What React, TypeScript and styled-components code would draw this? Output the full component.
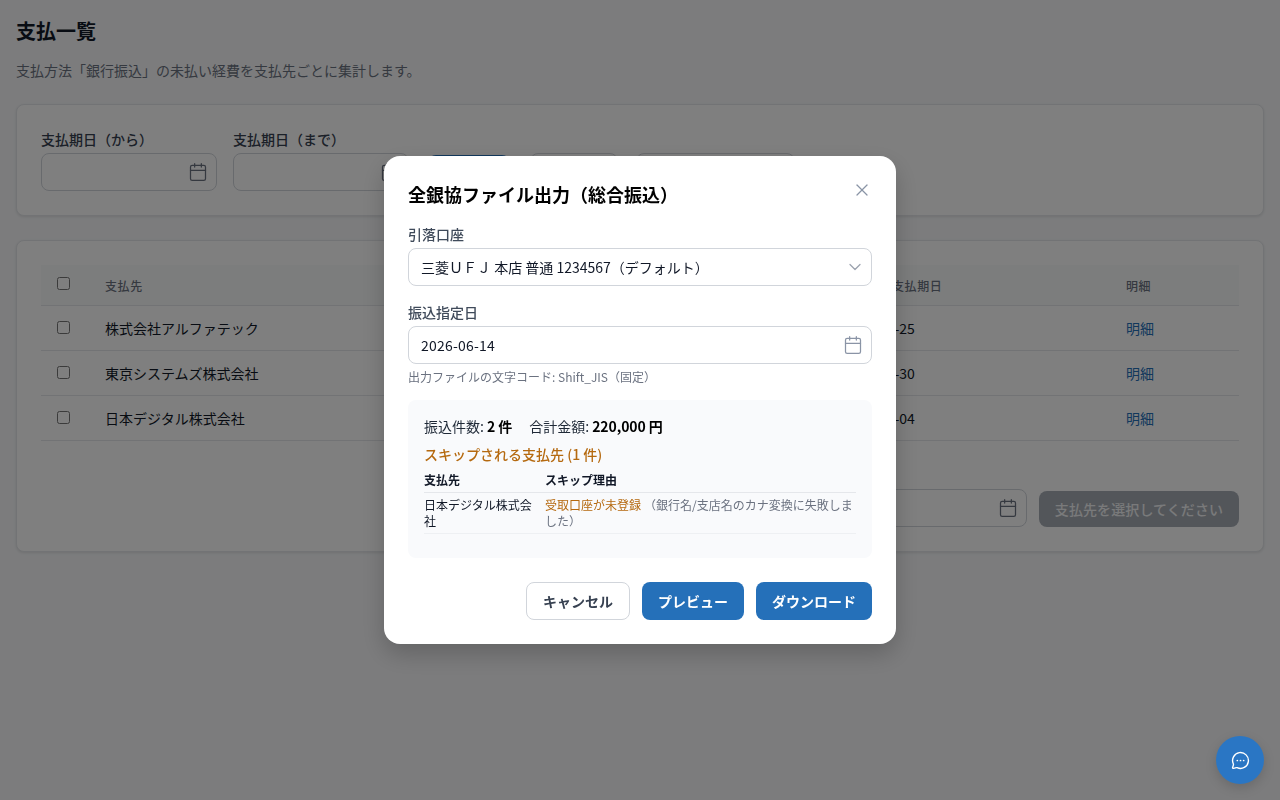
import { Calendar, ChevronDown, X } from "lucide-react"
import styled, { createGlobalStyle } from "styled-components"

const GlobalStyle = createGlobalStyle`
  html, body {
    margin: 0;
    padding: 0;
    background: #f8f9fb;
    color: #111827;
    font-family: "Noto Sans CJK JP", "Noto Sans", sans-serif;
    font-size: 14px;
  }
  * {
    box-sizing: border-box;
  }
`

const Page = styled.main`
  display: flex;
  flex-direction: column;
  padding: 16px;
  height: 800px;
`

const Title = styled.h1`
  margin: 0;
  font-size: 20px;
  line-height: 30px;
  font-weight: 700;
`

const Lead = styled.p`
  margin: 14px 0 0;
  font-size: 14px;
  line-height: 21px;
  color: #6b7280;
`

const Card = styled.section<{ $top: number }>`
  margin-top: ${(p) => p.$top}px;
  padding: 24px;
  background: #fff;
  border: 1px solid #e5e7eb;
  border-radius: 8px;
  box-shadow: 0 1px 3px rgba(0, 0, 0, 0.1);
`

const FilterRow = styled.div`
  display: flex;
  align-items: flex-end;
`

const Field = styled.div<{ $gap?: number }>`
  display: flex;
  flex-direction: column;
  width: 176px;
  margin-right: ${(p) => p.$gap ?? 0}px;
`

const FilterLabel = styled.label`
  font-size: 14px;
  line-height: 20px;
  font-weight: 500;
  color: #374151;
  margin-bottom: 4px;
`

const InputBox = styled.div`
  display: flex;
  align-items: center;
  justify-content: space-between;
  height: 38px;
  padding: 0 8px 0 12px;
  background: #fff;
  border: 1px solid #d1d5db;
  border-radius: 8px;
  font-size: 14px;
  color: #111827;
  svg {
    color: #6b7280;
    flex: none;
  }
`

const GhostButton = styled.div<{ $width: number; $left: number; $solid?: boolean }>`
  width: ${(p) => p.$width}px;
  height: ${(p) => (p.$solid ? 36 : 38)}px;
  margin-left: ${(p) => p.$left}px;
  border-radius: 8px;
  background: ${(p) => (p.$solid ? "#2570b9" : "#fff")};
  border: ${(p) => (p.$solid ? "none" : "1px solid #d1d5db")};
`

const Table = styled.div`
  display: flex;
  flex-direction: column;
`

const Row = styled.div<{ $head?: boolean }>`
  display: grid;
  grid-template-columns: 48px 742px 279px 129px;
  align-items: center;
  height: ${(p) => (p.$head ? 41 : 45)}px;
  background: ${(p) => (p.$head ? "#f9fafb" : "transparent")};
  border-bottom: 1px solid #e5e7eb;
`

const CheckCell = styled.div<{ $lift: number }>`
  display: flex;
  padding-left: 16px;
  input {
    margin: 0 0 ${(p) => p.$lift}px;
    width: 13px;
    height: 13px;
  }
`

const HeadCell = styled.div<{ $left?: number }>`
  padding-left: ${(p) => p.$left ?? 16}px;
  font-size: 12px;
  font-weight: 500;
  color: #6b7280;
  letter-spacing: 0.6px;
`

const BodyCell = styled.div<{ $left?: number }>`
  padding-left: ${(p) => p.$left ?? 16}px;
  font-size: 14px;
  color: #111827;
`

const DetailLink = styled.a`
  color: #2570b9;
  font-size: 14px;
`

const TableFooter = styled.div`
  display: flex;
  justify-content: flex-end;
  align-items: flex-end;
  gap: 12px;
  margin-top: 48px;
`

const DisabledButton = styled.div`
  display: flex;
  align-items: center;
  justify-content: center;
  width: 200px;
  height: 36px;
  border-radius: 8px;
  background: #a6acb5;
  color: #f3f4f6;
  font-size: 14px;
  font-weight: 500;
  letter-spacing: 0.1px;
`

const Overlay = styled.div`
  position: fixed;
  inset: 0;
  display: flex;
  align-items: center;
  justify-content: center;
  background: rgba(0, 0, 0, 0.5);
`

const Modal = styled.div`
  display: flex;
  flex-direction: column;
  width: 512px;
  height: 488px;
  padding: 24px;
  background: #fff;
  border-radius: 16px;
  box-shadow: 0 10px 25px rgba(0, 0, 0, 0.2);
`

const ModalHeader = styled.div`
  display: flex;
  align-items: flex-start;
  justify-content: space-between;
  height: 32px;
`

const ModalTitle = styled.h2`
  margin: 0;
  font-size: 18px;
  line-height: 28px;
  font-weight: 700;
  color: #000;
`

const CloseButton = styled.button`
  display: flex;
  padding: 0;
  border: none;
  background: none;
  color: #8a94a6;
`

const ModalLabel = styled.label<{ $top: number }>`
  display: block;
  margin-top: ${(p) => p.$top}px;
  font-size: 14px;
  line-height: 21px;
  font-weight: 500;
  color: #3f4a5a;
`

const ModalInput = styled(InputBox)`
  margin-top: 3px;
  svg {
    color: #8a94a6;
  }
`

const ModalSelect = styled(ModalInput)`
  padding-right: 6px;
  svg {
    color: #9ca3af;
  }
`

const DateValue = styled.span`
  letter-spacing: 0.2px;
`

const Hint = styled.div`
  margin-top: 4px;
  font-size: 12px;
  line-height: 18px;
  color: #6b7280;
`

const Summary = styled.div`
  height: 158px;
  margin-top: 14px;
  padding: 16px;
  background: #f9fafc;
  border-radius: 8px;
`

const Totals = styled.div`
  display: flex;
  gap: 17px;
  font-size: 14px;
  line-height: 21px;
  color: #1f2937;
  strong {
    font-weight: 700;
    color: #000;
    letter-spacing: -0.1px;
  }
`

const SkipTitle = styled.div`
  margin-top: 7px;
  font-size: 14px;
  line-height: 21px;
  font-weight: 500;
  color: #b5690f;
`

const SkipTable = styled.div`
  margin-top: 3px;
  font-size: 12px;
  line-height: 16px;
`

const SkipRow = styled.div<{ $head?: boolean }>`
  display: grid;
  grid-template-columns: 121px 1fr;
  padding: 4px 0;
  border-bottom: 1px solid ${(p) => (p.$head ? "#e5e7eb" : "#eef0f3")};
  font-weight: ${(p) => (p.$head ? 700 : 400)};
  color: #111827;
  > div:first-child {
    padding-right: 8px;
  }
`

const Reason = styled.span`
  color: #b5690f;
`

const ReasonNote = styled.span`
  color: #6b7280;
  margin-left: 3px;
`

const ModalFooter = styled.div`
  display: flex;
  justify-content: flex-end;
  gap: 12px;
  margin-top: 24px;
`

const ModalButton = styled.button<{ $primary?: boolean }>`
  height: 38px;
  padding: 0 16px;
  border-radius: 8px;
  border: ${(p) => (p.$primary ? "none" : "1px solid #d1d5db")};
  background: ${(p) => (p.$primary ? "#2570b9" : "#fff")};
  color: ${(p) => (p.$primary ? "#fff" : "#374151")};
  font-family: inherit;
  font-size: 14px;
  font-weight: 700;
`

const ChatButton = styled.button`
  position: fixed;
  right: 16px;
  bottom: 16px;
  display: flex;
  align-items: center;
  justify-content: center;
  width: 48px;
  height: 48px;
  padding: 0;
  border: none;
  border-radius: 50%;
  background: #2a76c4;
  color: #fff;
  box-shadow: 0 4px 12px rgba(0, 0, 0, 0.15);
`

const ChatIcon = () => (
  <svg width="19" height="19" viewBox="0 0 24 24" fill="none" stroke="currentColor" strokeWidth="1.75" strokeLinecap="round" strokeLinejoin="round">
    <path d="M2.992 16.342a2 2 0 0 1 .094 1.167l-1.065 3.29a1 1 0 0 0 1.236 1.168l3.413-.998a2 2 0 0 1 1.099.092 10 10 0 1 0-4.777-4.719" />
    <circle cx="8" cy="12" r="1.1" fill="currentColor" stroke="none" />
    <circle cx="12" cy="12" r="1.1" fill="currentColor" stroke="none" />
    <circle cx="16" cy="12" r="1.1" fill="currentColor" stroke="none" />
  </svg>
)

const payees = [
  { name: "株式会社アルファテック", date: "2026-06-25" },
  { name: "東京システムズ株式会社", date: "2026-06-30" },
  { name: "日本デジタル株式会社", date: "2026-07-04" },
]

export default function App() {
  return (
    <>
      <GlobalStyle />
      <Page>
        <Title>支払一覧</Title>
        <Lead>支払方法「銀行振込」の未払い経費を支払先ごとに集計します。</Lead>

        <Card $top={23}>
          <FilterRow>
            <Field $gap={16}>
              <FilterLabel>支払期日（から）</FilterLabel>
              <InputBox>
                <span />
                <Calendar size={20} strokeWidth={1.5} />
              </InputBox>
            </Field>
            <Field>
              <FilterLabel>支払期日（まで）</FilterLabel>
              <InputBox>
                <span />
                <Calendar size={20} strokeWidth={1.5} />
              </InputBox>
            </Field>
            <GhostButton $solid $width={82} $left={19} />
            <GhostButton $width={88} $left={20} />
            <GhostButton $width={159} $left={18} />
          </FilterRow>
        </Card>

        <Card $top={24}>
          <Table>
            <Row $head>
              <CheckCell $lift={3}>
                <input type="checkbox" />
              </CheckCell>
              <HeadCell>支払先</HeadCell>
              <HeadCell $left={61}>支払期日</HeadCell>
              <HeadCell>明細</HeadCell>
            </Row>
            {payees.map((payee) => (
              <Row key={payee.name}>
                <CheckCell $lift={2}>
                  <input type="checkbox" />
                </CheckCell>
                <BodyCell>{payee.name}</BodyCell>
                <BodyCell $left={12}>{payee.date}</BodyCell>
                <BodyCell>
                  <DetailLink>明細</DetailLink>
                </BodyCell>
              </Row>
            ))}
          </Table>
          <TableFooter>
            <Field>
              <InputBox>
                <span />
                <Calendar size={20} strokeWidth={1.5} />
              </InputBox>
            </Field>
            <DisabledButton>支払先を選択してください</DisabledButton>
          </TableFooter>
        </Card>
      </Page>

      <Overlay>
        <Modal>
          <ModalHeader>
            <ModalTitle>全銀協ファイル出力（総合振込）</ModalTitle>
            <CloseButton>
              <X size={20} strokeWidth={1.5} />
            </CloseButton>
          </ModalHeader>

          <ModalLabel $top={12}>引落口座</ModalLabel>
          <ModalSelect>
            <span>三菱ＵＦＪ 本店 普通 1234567（デフォルト）</span>
            <ChevronDown size={20} strokeWidth={1.5} />
          </ModalSelect>

          <ModalLabel $top={16}>振込指定日</ModalLabel>
          <ModalInput>
            <DateValue>2026-06-14</DateValue>
            <Calendar size={20} strokeWidth={1.5} />
          </ModalInput>
          <Hint>出力ファイルの文字コード: Shift_JIS（固定）</Hint>

          <Summary>
            <Totals>
              <span>
                振込件数: <strong>2 件</strong>
              </span>
              <span>
                合計金額: <strong>220,000 円</strong>
              </span>
            </Totals>
            <SkipTitle>スキップされる支払先 (1 件)</SkipTitle>
            <SkipTable>
              <SkipRow $head>
                <div>支払先</div>
                <div>スキップ理由</div>
              </SkipRow>
              <SkipRow>
                <div>日本デジタル株式会社</div>
                <div>
                  <Reason>受取口座が未登録</Reason>
                  <ReasonNote>（銀行名/支店名のカナ変換に失敗しました）</ReasonNote>
                </div>
              </SkipRow>
            </SkipTable>
          </Summary>

          <ModalFooter>
            <ModalButton>キャンセル</ModalButton>
            <ModalButton $primary>プレビュー</ModalButton>
            <ModalButton $primary>ダウンロード</ModalButton>
          </ModalFooter>
        </Modal>
      </Overlay>

      <ChatButton>
        <ChatIcon />
      </ChatButton>
    </>
  )
}
